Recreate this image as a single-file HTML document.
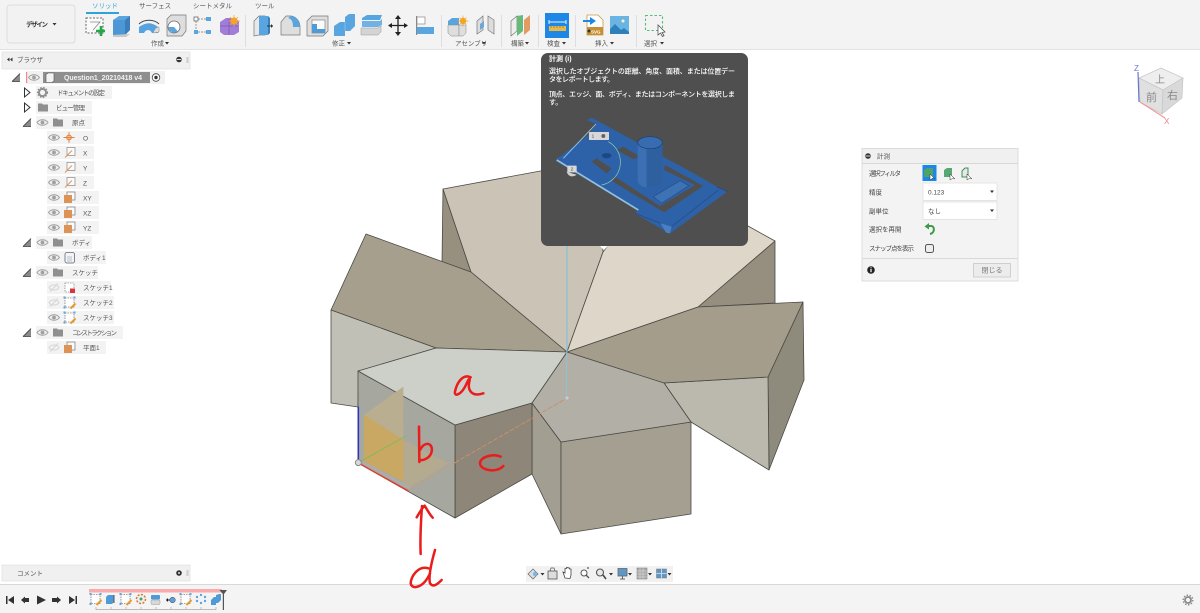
<!DOCTYPE html>
<html lang="ja"><head><meta charset="utf-8"><title>計測</title>
<style>
html,body{margin:0;padding:0;background:#fff;width:1200px;height:613px;overflow:hidden}
svg{display:block}
text{font-family:"Liberation Sans","Noto Sans CJK JP",sans-serif;font-size:7px;fill:#555}
.b{font-weight:700}
.w{fill:#fff}
.e{stroke:#4a4a44;stroke-width:.8;stroke-linejoin:round}
</style></head><body>
<svg width="1200" height="613" viewBox="0 0 1200 613" xmlns="http://www.w3.org/2000/svg">
<defs>
<filter id="s" x="-5%" y="-5%" width="110%" height="110%"><feGaussianBlur stdDeviation="0.35"/></filter>
<g id="eye"><path d="M-5.500,0C-3,-3.600 3,-3.600 5.500,0C3,3.600 -3,3.600 -5.500,0Z" fill="#eee" stroke="#a0a0a0" stroke-width="1"/><circle r="1.900" fill="#a0a0a0"/></g>
<g id="eyeoff"><path d="M-5,0C-3,-3.400 3,-3.400 5,0C3,3.400 -3,3.400 -5,0Z" fill="none" stroke="#d5d5d5" stroke-width="1"/><path d="M-4,4L4,-4" stroke="#d5d5d5"/></g>
<path id="fold" d="M-5,-4H-1L0,-3H5V4H-5Z" fill="#8f8f8f"/>
<g id="tri"><path d="M-4,4L4,-4V4Z" fill="#8a8a8a"/><path d="M-4,4L4,-4" stroke="#333" stroke-width=".8"/><path d="M-4,4H4" stroke="#444" stroke-width=".8"/></g>
<path id="tro" d="M-2.500,-4.500L3,0L-2.500,4.500Z" fill="#fff" stroke="#333" stroke-width="1"/>
<g id="axis"><rect x="-3" y="-5" width="8" height="8" fill="#fafafa" stroke="#888" stroke-width=".7"/><path d="M-5,5L2,-2" stroke="#e2934d" stroke-width=".9"/></g>
<g id="plane"><rect x="-2" y="-6" width="8" height="8" fill="#fafafa" stroke="#777" stroke-width=".7"/><rect x="-5" y="-3" width="8" height="8" fill="#dd9257"/></g>
<g id="sk"><rect x="-4.500" y="-4.500" width="9" height="9" fill="#fff" stroke="#555" stroke-width=".6" stroke-dasharray="1.500 1"/><g fill="#5aa6df"><rect x="-6" y="-6" width="2" height="2"/><rect x="4" y="-6" width="2" height="2"/><rect x="-6" y="4" width="2" height="2"/></g><path d="M1,6L6,1" stroke="#e69a2e" stroke-width="2"/></g>
<polygon id="dn" points="-2,-1 2,-1 0,1.500" fill="#333"/>
</defs>

<rect width="1200" height="613" fill="#fff"/>

<!-- 3D model -->
<g filter="url(#s)">
<polygon class="e" points="443,189 471,272 442,262" fill="#97907f"/>
<polygon class="e" points="775,241 775,303 698,307" fill="#968f80"/>
<polygon class="e" points="443,189 600,160 603,252 567,352 471,272" fill="#cac3b6"/>
<polygon class="e" points="603,252 650,190 748,226 775,241 698,307 567,352" fill="#ddd6c9"/>
<polygon class="e" points="366,234 471,272 567,352 436,348 331,310" fill="#a69f8d"/>
<polygon class="e" points="331,310 436,348 359,371 358,407 331,403" fill="#c0c0b7"/>
<polygon class="e" points="803,302 804,380 769,470 768,377" fill="#8e8a7c"/>
<polygon class="e" points="664,383 768,377 769,470 691,422" fill="#bbb8ae"/>
<polygon class="e" points="567,352 698,307 803,302 768,377 663,383" fill="#a49d8b"/>
<polygon class="e" points="532,403 561,442 561,534 532,474" fill="#a29e92"/>
<polygon class="e" points="561,442 691,422 691,514 561,534" fill="#a49f91"/>
<polygon class="e" points="532,403 567,352 664,383 691,422 561,442" fill="#b2afa7"/>
<polygon class="e" points="455,425 532,403 532,474 455,518" fill="#8e8678"/>
<polygon class="e" points="358,371 455,425 455,518 358,463" fill="#a6a79f"/>
<polygon class="e" points="358,371 436,348 567,352 532,403 455,425" fill="#cdd0c8"/>
<g transform="translate(340,340) scale(.33333)">
<polygon points="72,225 190,140 190,300" fill="#b9ae8f"/>
<polygon points="190,300 325,370 205,445 190,425" fill="#b3aa8f"/>
<polygon points="72,225 190,300 190,425 72,365" fill="#c9a864"/>
<path d="M205,450L345,368" stroke="#c99b74" stroke-width="3" stroke-dasharray="14 5" fill="none"/>
<path d="M345,368L680,175" stroke="#c9906a" stroke-width="3" stroke-dasharray="14 5" fill="none"/>
<path d="M62,372L205,450" stroke="#acacac" stroke-width="8" fill="none" transform="translate(6,-5)"/>
<path d="M62,373L205,453" stroke="#e03a2c" stroke-width="4" fill="none"/>
<path d="M55,200V365" stroke="#2a33c8" stroke-width="4.500" fill="none"/>
<path d="M60,365L200,287" stroke="#86b85a" stroke-width="3" fill="none"/>
<circle cx="55" cy="368" r="9" fill="#d8d8d8" stroke="#888" stroke-width="3"/>
<path d="M680,35V170" stroke="#8fc1d6" stroke-width="3" fill="none"/>
<circle cx="681" cy="174" r="6" fill="#ccc" stroke="#aaa" stroke-width="1.500"/>
</g>
<path d="M567,246V352" stroke="#7fc3dc" stroke-width="1.100"/>
</g>

<!-- Toolbar -->
<rect width="1200" height="49" fill="#f3f3f3"/>
<rect y="49" width="1200" height="1" fill="#e2e2e2"/>
<rect x="7" y="5" width="68" height="38" rx="3" fill="#f2f2f2" stroke="#dcdcdc"/>
<text x="26" y="26.500" class="b" style="fill:#333;font-size:6.500px" textLength="22">デザイン</text>
<use href="#dn" x="54.500" y="24"/>
<g filter="url(#s)">
<text x="92" y="8" style="fill:#2ea3d8;font-size:6.500px">ソリッド</text>
<rect x="86" y="12" width="33" height="2" fill="#2ea3d8"/>
<text x="139" y="8" style="font-size:6.500px">サーフェス</text>
<text x="193" y="8" style="font-size:6.500px">シートメタル</text>
<text x="255" y="8" style="font-size:6.500px">ツール</text>
<g fill="#dedede"><rect x="245" y="15" width="1" height="32"/><rect x="441" y="15" width="1" height="32"/><rect x="501" y="15" width="1" height="32"/><rect x="538" y="15" width="1" height="32"/><rect x="575" y="15" width="1" height="32"/><rect x="636" y="15" width="1" height="32"/></g>
<text x="151" y="45.500" style="font-size:6.500px">作成</text><use href="#dn" x="167" y="43"/>
<text x="332" y="45.500" style="font-size:6.500px">修正</text><use href="#dn" x="349" y="43"/>
<text x="455" y="45.500" style="font-size:6.500px">アセンブリ</text><use href="#dn" x="484" y="43"/>
<text x="511" y="45.500" style="font-size:6.500px">構築</text><use href="#dn" x="527" y="43"/>
<text x="547" y="45.500" style="font-size:6.500px">検査</text><use href="#dn" x="564" y="43"/>
<text x="595" y="45.500" style="font-size:6.500px">挿入</text><use href="#dn" x="612" y="43"/>
<text x="644" y="45.500" style="font-size:6.500px">選択</text><use href="#dn" x="662" y="43"/>

<!-- create icons -->
<rect x="86" y="18" width="17" height="15" fill="#fafafa" stroke="#666" stroke-dasharray="2 1.500"/>
<path d="M90,22H100L93,30" fill="none" stroke="#888" stroke-width=".8"/>
<path d="M101,26V36M96,31H105" stroke="#22a84a" stroke-width="2.600"/>
<path d="M113,20L119,16H130V30L125,35H113Z" fill="#5aa5e0"/>
<path d="M113,20H125V35H113Z" fill="#4d97d6"/>
<path d="M125,20L130,16V30L125,35Z" fill="#3a7fba"/>
<path d="M130,34L113,35V37H126Z" fill="#c8c8c8"/>
<path d="M139,24C144,19 154,19 159,24" fill="none" stroke="#444"/>
<path d="M139,27C146,22 152,22 158,27L158,33H152C150,29 146,29 144,33H139Z" fill="#55a3e0"/>
<path d="M153,33C155,28 157,27 159,27V32Z" fill="#ddd" stroke="#888" stroke-width=".5"/>
<path d="M167,19L171,15H186V31L182,36H167Z" fill="#dedede" stroke="#777" stroke-width=".7"/>
<circle cx="174" cy="27" r="6" fill="#fff" stroke="#666" stroke-width=".8"/><path d="M174,27L168.500,27A6,6 0 0 0 178,31.500Z" fill="#58a5e0"/>
<rect x="194" y="17" width="4" height="4" fill="#fff" stroke="#555" stroke-width=".7"/>
<rect x="206" y="17" width="5" height="4" fill="#58a5e0"/><rect x="194" y="30" width="4" height="4" fill="#58a5e0"/><rect x="206" y="30" width="5" height="4" fill="#58a5e0"/>
<path d="M198,19H206M196,21V30M198,32H206" stroke="#777" stroke-width=".7" stroke-dasharray="2 1"/>
<path d="M220,22L226,18H236L239,22V32L234,35H224L220,32Z" fill="#a17dd8"/><path d="M220,26H238M229,19V35" stroke="#7c58b5" stroke-width=".8"/>
<circle cx="234" cy="21" r="3.500" fill="#f3a52a"/><path d="M234,15V27M228,21H240M230,17L238,25M238,17L230,25" stroke="#f3a52a" stroke-width=".8"/>
<!-- modify icons -->
<path d="M254,21L259,16H265V35H259L254,36Z" fill="#e8e8e8" stroke="#777" stroke-width=".7"/>
<path d="M259,16H268V35H259Z" fill="#58a5e0"/><path d="M268,16L270,18V33L268,35Z" fill="#3a80bd"/>
<path d="M267,26H273" stroke="#333"/><path d="M273,24L271,26L273,28Z" fill="#333" transform="rotate(180 272 26)"/>
<path d="M281,35V22L286,16H291C297,17 300,22 300,27V35Z" fill="#dedede" stroke="#777" stroke-width=".7"/>
<path d="M291,16C297,17 300,22 300,27H293C293,22 292,19 288,18Z" fill="#58a5e0"/>
<path d="M307,21L312,16H328V31L323,36H307Z" fill="#dedede" stroke="#777" stroke-width=".7"/><rect x="312" y="20" width="13" height="13" fill="#fafafa" stroke="#777" stroke-width=".6"/><path d="M312,24H317V29H325V33H312Z" fill="#4f9bd8"/>
<path d="M334,26L340,22H345V17L349,14H355V26L350,31H345V36H334Z" fill="#58a5e0"/><path d="M345,22L345,31" stroke="#8cc4ee" stroke-width=".8"/>
<path d="M362,18L367,15H382L380,20H362Z" fill="#58a5e0"/><path d="M362,21H380L382,19V25L378,27H362Z" fill="#6fb2e6"/><path d="M361,28H378L381,26V32L378,35H361Z" fill="#d4d4d4" stroke="#999" stroke-width=".5"/>
<path d="M398,16V35M389,25.500H407" stroke="#222" stroke-width="1.300"/><path d="M398,15L395,19H401ZM398,36L395,32H401ZM388,25.500L392,23V28ZM408,25.500L404,23V28Z" fill="#222"/>
<rect x="416" y="16" width="1.200" height="19" fill="#888"/><rect x="417" y="17" width="8" height="7" fill="#fff" stroke="#888" stroke-width=".7"/><rect x="417" y="27" width="17" height="7" fill="#58a5e0"/>
<!-- assembly -->
<path d="M448,21L452,18H459V25H448Z" fill="#58a5e0"/><path d="M448,25H459V36H451L448,33Z" fill="#dedede" stroke="#888" stroke-width=".5"/><path d="M459,25H466V33L463,36H459Z" fill="#dedede" stroke="#888" stroke-width=".5"/>
<circle cx="463" cy="21" r="3.200" fill="#f3a52a"/><path d="M463,15.500V26.500M457.500,21H468.500M459.500,17.500L466.500,24.500M466.500,17.500L459.500,24.500" stroke="#f3a52a" stroke-width=".7"/>
<path d="M477,21L483,16V30L477,34Z" fill="#ddd" stroke="#777" stroke-width=".7"/><path d="M488,16L494,20V34L488,30Z" fill="#ddd" stroke="#777" stroke-width=".7"/><path d="M480,24L484,21V27L480,30Z" fill="#6aa8da"/>
<!-- construct -->
<path d="M511,21L517,16V31L511,36Z" fill="#eee" stroke="#777" stroke-width=".7"/>
<path d="M517,16L523,15V31L517,36Z" fill="#66bb78"/><path d="M524,20L530,15V30L524,35Z" fill="#e39a63"/>
<!-- inspect -->
<rect x="545" y="13" width="24" height="25" fill="#1b87e6"/>
<path d="M549,22H566" stroke="#e8f2fb"/><path d="M549,20V24M566,20V24" stroke="#e8f2fb"/>
<rect x="549" y="26" width="17" height="5" fill="#e5ba4a"/><path d="M551,26V28M554,26V28M557,26V28M560,26V28M563,26V28" stroke="#7a6420" stroke-width=".6"/>
<!-- insert -->
<path d="M587,15H598L603,20V35H587Z" fill="#fff" stroke="#c49a4d" stroke-width=".8"/>
<path d="M583,21H591" stroke="#1b87e6" stroke-width="2"/><path d="M590,17L596,21L590,25Z" fill="#1b87e6"/>
<rect x="587" y="27" width="16" height="8" fill="#c69034"/><text x="591" y="33.500" style="font-size:4.500px;fill:#fff" class="b">SVG</text><circle cx="589" cy="31" r="1.500" fill="#333"/>
<rect x="610" y="16" width="19" height="18" fill="#6ab4e4"/><circle cx="623" cy="21" r="1.500" fill="#fff3c4"/><path d="M610,34V29L615,24L621,30L624,28L629,32V34Z" fill="#2d80ba"/>
<!-- select -->
<rect x="645.500" y="15.500" width="17" height="15" fill="none" stroke="#52c07a" stroke-width="1.100" stroke-dasharray="2.500 2"/>
<path d="M658,25L658,35L660.500,33L662.500,36.500L664,35.500L662,32.500L665,32Z" fill="#fff" stroke="#555" stroke-width=".8"/>
</g>

<!-- Browser -->
<g filter="url(#s)">
<rect x="2" y="52" width="188" height="17" fill="#f0f0f0" stroke="#e3e3e3" stroke-width=".8"/>
<path d="M7,59.500L9.500,57.500V61.500ZM10,59.500L12.500,57.500V61.500Z" fill="#333"/>
<text x="17" y="62" style="font-size:6.500px">ブラウザ</text>
<circle cx="179" cy="59.500" r="2.800" fill="#333"/><rect x="176.800" y="59" width="4.400" height="1" fill="#ddd"/>
<rect x="186.500" y="57" width="2" height="6" fill="#ccc"/>

<use href="#tri" x="16" y="77.500"/>
<rect x="27" y="71" width="138" height="13" fill="#f1f1f1"/>
<rect x="26" y="72" width="1.200" height="11" fill="#f08a8a"/>
<use href="#eye" x="34" y="77.500"/>
<rect x="43" y="72" width="107" height="11" fill="#8f8f8f"/>
<path d="M46,74.500L48,73H54V81L52,82.500H46Z" fill="#f2f2f2" stroke="#555" stroke-width=".6"/>
<text x="64" y="80" class="b" style="fill:#f1f1f1;font-size:7px" textLength="78">Question1_20210418 v4</text>
<circle cx="156" cy="77.500" r="3.800" fill="#fff" stroke="#444" stroke-width=".8"/><circle cx="156" cy="77.500" r="1.700" fill="#333"/>

<use href="#tro" x="27" y="92.500"/>
<rect x="36" y="86" width="76" height="13" fill="#f3f3f3"/>
<circle cx="42.500" cy="92.500" r="3.600" fill="none" stroke="#8f8f8f" stroke-width="2"/><circle cx="42.500" cy="92.500" r="5" fill="none" stroke="#8f8f8f" stroke-width="1.200" stroke-dasharray="1.500 1.500"/>
<text x="57" y="95" style="font-size:6.500px" textLength="48">ドキュメントの設定</text>

<use href="#tro" x="27" y="107.500"/>
<rect x="36" y="101" width="56" height="13" fill="#f3f3f3"/><use href="#fold" x="43" y="107.500"/>
<text x="56" y="110" style="font-size:6.500px" textLength="29">ビュー管理</text>

<use href="#tri" x="27" y="122.500"/>
<rect x="36" y="116" width="56" height="13" fill="#f3f3f3"/><use href="#eye" x="42.500" y="122.500"/><use href="#fold" x="58" y="122.500"/>
<text x="72" y="125" style="font-size:6.500px">原点</text>

<rect x="47" y="131" width="47" height="13" fill="#f3f3f3"/><use href="#eye" x="54" y="137.500"/>
<circle cx="69" cy="137.500" r="2.300" fill="none" stroke="#e2813a" stroke-width="1.200"/><path d="M69,132V143M63.500,137.500H74.500" stroke="#e2813a" stroke-width=".9"/><text x="83" y="140.500" style="font-size:6.500px">O</text>
<rect x="47" y="146" width="47" height="13" fill="#f3f3f3"/><use href="#eye" x="54" y="152.500"/><use href="#axis" x="70" y="152.500"/><text x="83" y="155.500" style="font-size:6.500px">X</text>
<rect x="47" y="161" width="47" height="13" fill="#f3f3f3"/><use href="#eye" x="54" y="167.500"/><use href="#axis" x="70" y="167.500"/><text x="83" y="170.500" style="font-size:6.500px">Y</text>
<rect x="47" y="176" width="47" height="13" fill="#f3f3f3"/><use href="#eye" x="54" y="182.500"/><use href="#axis" x="70" y="182.500"/><text x="83" y="185.500" style="font-size:6.500px">Z</text>
<rect x="47" y="191" width="52" height="13" fill="#f3f3f3"/><use href="#eye" x="54" y="197.500"/><use href="#plane" x="69" y="198"/><text x="83" y="200.500" style="font-size:6.500px">XY</text>
<rect x="47" y="206" width="52" height="13" fill="#f3f3f3"/><use href="#eye" x="54" y="212.500"/><use href="#plane" x="69" y="213"/><text x="83" y="215.500" style="font-size:6.500px">XZ</text>
<rect x="47" y="221" width="52" height="13" fill="#f3f3f3"/><use href="#eye" x="54" y="227.500"/><use href="#plane" x="69" y="228"/><text x="83" y="230.500" style="font-size:6.500px">YZ</text>

<use href="#tri" x="27" y="242.500"/>
<rect x="36" y="236" width="56" height="13" fill="#f3f3f3"/><use href="#eye" x="42.500" y="242.500"/><use href="#fold" x="58" y="242.500"/>
<text x="72" y="245" style="font-size:6.500px">ボディ</text>
<rect x="47" y="251" width="59" height="13" fill="#f3f3f3"/><use href="#eye" x="54" y="257.500"/>
<rect x="65" y="252.500" width="9.500" height="10.500" rx="2" fill="#f4f4f4" stroke="#667" stroke-width=".8"/><rect x="67" y="256" width="5" height="6" fill="#d5dbe2"/>
<text x="83" y="260" style="font-size:6.500px">ボディ1</text>

<use href="#tri" x="27" y="272.500"/>
<rect x="36" y="266" width="62" height="13" fill="#f3f3f3"/><use href="#eye" x="42.500" y="272.500"/><use href="#fold" x="58" y="272.500"/>
<text x="72" y="275" style="font-size:6.500px">スケッチ</text>
<rect x="47" y="281" width="64" height="13" fill="#f3f3f3"/><use href="#eyeoff" x="54" y="287.500"/>
<rect x="65" y="283" width="9" height="9" fill="#fff" stroke="#666" stroke-width=".6" stroke-dasharray="1.500 1"/><rect x="70" y="288.500" width="5" height="4.500" fill="#d8363c"/>
<text x="83" y="290" style="font-size:6.500px">スケッチ1</text>
<rect x="47" y="296" width="67" height="13" fill="#f3f3f3"/><use href="#eyeoff" x="54" y="302.500"/><use href="#sk" x="69.500" y="302.500"/>
<text x="83" y="305" style="font-size:6.500px">スケッチ2</text>
<rect x="47" y="311" width="67" height="13" fill="#f3f3f3"/><use href="#eye" x="54" y="317.500"/><use href="#sk" x="69.500" y="317.500"/>
<text x="83" y="320" style="font-size:6.500px">スケッチ3</text>

<use href="#tri" x="27" y="332.500"/>
<rect x="36" y="326" width="87" height="13" fill="#f3f3f3"/><use href="#eye" x="42.500" y="332.500"/><use href="#fold" x="58" y="332.500"/>
<text x="72" y="335" style="font-size:6.500px" textLength="45">コンストラクション</text>
<rect x="47" y="341" width="59" height="13" fill="#f3f3f3"/><use href="#eyeoff" x="54" y="347.500"/><use href="#plane" x="69" y="348"/>
<text x="83" y="350" style="font-size:6.500px">平面1</text>
</g>

<!-- Tooltip -->
<rect x="541" y="53" width="207" height="193" rx="7" fill="#4f4f4f"/>
<polygon points="600,246 608,246 604,250" fill="#fff"/>
<g filter="url(#s)">
<text x="549" y="61" class="b" style="fill:#fff;font-size:7px">計測 (i)</text>
<text x="549" y="73.500" style="fill:#fff;font-size:7px;font-weight:500" textLength="186">選択したオブジェクトの距離、角度、面積、または位置デー</text>
<text x="549" y="81.500" style="fill:#fff;font-size:7px;font-weight:500" textLength="65">タをレポートします。</text>
<text x="549" y="96.500" style="fill:#fff;font-size:7px;font-weight:500" textLength="186">頂点、エッジ、面、ボディ、またはコンポーネントを選択しま</text>
<text x="549" y="104.500" style="fill:#fff;font-size:7px;font-weight:500">す。</text>
<g transform="translate(540,50) scale(.33333)">
<path d="M140,210L155,203L470,375L530,410L562,425L390,550L362,535L285,490L297,478L110,365L48,326L60,320L145,255L170,222Z" fill="#2f62a8"/>
<path d="M362,520L378,548L390,550L395,530Z" fill="#4a80c4"/>
<path d="M285,490L362,520M395,530L535,420M530,410L562,425" stroke="#234a80" stroke-width="2" fill="none"/>
<path d="M50,330L295,480" stroke="#8fc0e6" stroke-width="5" fill="none"/>
<path d="M70,325L168,222" stroke="#9cc9e8" stroke-width="2.500" fill="none"/>
<path d="M230,300L250,290L300,320L280,328Z M155,335L170,325L215,355L200,370Z" fill="#4f4f4f"/>
<path d="M375,345L490,408L372,487L218,395L222,378L360,468L465,405L372,360Z" fill="#4f4f4f"/>
<path d="M340,440L420,392L447,407L365,460Z" fill="#3d72b5" stroke="#264f87" stroke-width="2"/>
<ellipse cx="200" cy="317" rx="15" ry="8" fill="#1f4a85"/>
<path d="M293,278V390C293,418 368,418 368,390V278Z" fill="#2e5f9f"/>
<path d="M293,278V390C293,405 310,412 320,412V278Z" fill="#3a70b4"/>
<ellipse cx="330" cy="278" rx="37" ry="18" fill="#376cb0" stroke="#1c3f72" stroke-width="2"/>
<path d="M205,275A70,70 0 0 1 185,405" fill="none" stroke="#8fd0a8" stroke-width="2"/>
<rect x="147" y="246" width="60" height="24" rx="2" fill="#d8d8d8"/><circle cx="190" cy="258" r="6" fill="#666"/><text x="155" y="263" style="font-size:14px;fill:#444">1</text>
<rect x="82" y="347" width="28" height="20" rx="2" fill="#d8d8d8"/><text x="92" y="362" style="font-size:14px;fill:#444">2</text>
<path d="M80,365C85,382 100,382 110,374L95,370Z" fill="#d0d0d0"/>
</g>
</g>

<!-- Measure panel -->
<g filter="url(#s)">
<rect x="862" y="148.500" width="156" height="132.500" fill="#f3f3f3" stroke="#dcdcdc"/>
<rect x="862.500" y="149" width="155" height="14" fill="#f0f0f0"/>
<rect x="862" y="163" width="156" height="1" fill="#d8d8d8"/>
<circle cx="868" cy="156" r="2.800" fill="#333"/><rect x="865.800" y="155.500" width="4.400" height="1" fill="#ddd"/>
<text x="877" y="158.500" style="font-size:6.500px">計測</text>
<text x="869" y="175.500" style="font-size:6.500px;fill:#444" textLength="32">選択フィルタ</text>
<rect x="922.500" y="165" width="14" height="16" fill="#1b87e6"/>
<path d="M924,170L927,168H933V177H924Z" fill="#4fa36a"/><path d="M930,174V180L933,178L935,179Z" fill="#fff" stroke="#333" stroke-width=".5"/>
<path d="M944,170L947,168H952V177H944Z" fill="#57a873"/><path d="M950,174V180L953,178L955,179Z" fill="#fff" stroke="#333" stroke-width=".5"/>
<path d="M962,171L965,168H968V177H962Z" fill="#e8e8e8" stroke="#3d8f58" stroke-width="1"/><path d="M967,174V180L970,178L972,179Z" fill="#fff" stroke="#333" stroke-width=".5"/>
<text x="869" y="194.500" style="font-size:6.500px;fill:#444">精度</text>
<rect x="923" y="183" width="74" height="17.500" fill="#fff" stroke="#e4e4e4"/>
<text x="928" y="194.500" style="font-size:6.500px;fill:#444">0.123</text><use href="#dn" x="992" y="191.500"/>
<text x="869" y="213.500" style="font-size:6.500px;fill:#444">副単位</text>
<rect x="923" y="202" width="74" height="17.500" fill="#fff" stroke="#e4e4e4"/>
<text x="928" y="213.500" style="font-size:6.500px;fill:#444">なし</text><use href="#dn" x="992" y="210.500"/>
<text x="869" y="231.500" style="font-size:6.500px;fill:#444">選択を再開</text>
<path d="M927,226H931C935,226 935,233 930,234" fill="none" stroke="#3f9a4c" stroke-width="2"/><path d="M929,223L924.500,226.500L929,229.500Z" fill="#3f9a4c"/>
<text x="869" y="250.500" style="font-size:6.500px;fill:#444" textLength="45">スナップ点を表示</text>
<rect x="925.500" y="244.500" width="8" height="8" rx="2" fill="#eee" stroke="#555"/>
<rect x="862.500" y="258" width="155" height="1" fill="#d8d8d8"/>
<circle cx="871" cy="270" r="3.800" fill="#222"/><rect x="870.400" y="269" width="1.200" height="3.200" fill="#fff"/><rect x="870.400" y="267.300" width="1.200" height="1" fill="#fff"/>
<rect x="973.500" y="263.500" width="37" height="13.500" fill="#ececec" stroke="#cfcfcf"/>
<text x="992" y="272.500" text-anchor="middle" style="font-size:7px;fill:#777">閉じる</text>
</g>

<!-- ViewCube -->
<g filter="url(#s)">
<polygon points="1139,78 1161,68 1183,78 1163,90" fill="#eeeeee" stroke="#c5c5c5" stroke-width=".7"/>
<polygon points="1139,78 1163,90 1162,114 1140,102" fill="#e0e0e0" stroke="#c5c5c5" stroke-width=".7"/>
<polygon points="1163,90 1183,78 1182,98 1162,114" fill="#d9d9d9" stroke="#c5c5c5" stroke-width=".7"/>
<text x="1155" y="83" style="font-size:10px;fill:#888">上</text>
<text x="1146" y="101" style="font-size:11px;fill:#888">前</text>
<text x="1167" y="99" style="font-size:11px;fill:#888">右</text>
<path d="M1139,102L1138,72" stroke="#6a74d8" stroke-width="1.200"/>
<path d="M1140,102L1165,118" stroke="#ef9a9a" stroke-width="1.200"/>
<text x="1134" y="71" style="font-size:8px;fill:#6a74d8">Z</text>
<text x="1164" y="124" style="font-size:8px;fill:#e98080">X</text>
</g>

<!-- View bar -->
<g filter="url(#s)">
<rect x="526" y="566" width="147" height="16" fill="#f1f1f1"/>
<path d="M533,569L538,574L533,579L528,574Z" fill="#ddd" stroke="#666" stroke-width=".7"/><circle cx="535" cy="574" r="2.200" fill="#7cb5e0"/><use href="#dn" x="542.500" y="574"/>
<rect x="548" y="571" width="9" height="8" fill="#ddd" stroke="#555" stroke-width=".8"/><path d="M550,571L551,568H554L555,571" fill="none" stroke="#555" stroke-width=".7"/>
<path d="M565,578L563,572L565,573V568.500H566.500V567.500H568V568H569.500V569H571V575L570,578.500Z" fill="#fff" stroke="#444" stroke-width=".8"/>
<circle cx="584" cy="573" r="3" fill="#fff" stroke="#555"/><path d="M586,575L589,578" stroke="#555" stroke-width="1.300"/><path d="M588,569V567M587,568H589" stroke="#555" stroke-width=".7"/>
<circle cx="600" cy="572.500" r="3.500" fill="#e8e8e8" stroke="#555" stroke-width="1.100"/><path d="M603,575L606,579" stroke="#444" stroke-width="1.600"/><use href="#dn" x="611" y="574"/>
<rect x="618" y="568.500" width="9" height="7.500" fill="#5f97c7" stroke="#666" stroke-width=".8"/><path d="M620,579H625M622.500,576V579" stroke="#666"/><use href="#dn" x="630" y="574"/>
<rect x="637" y="568" width="10" height="11" fill="#aaa" stroke="#777" stroke-width=".5"/><path d="M637,571H647M637,574H647M637,577H647M640,568V579M643,568V579" stroke="#e2e2e2" stroke-width=".5"/><use href="#dn" x="650" y="574"/>
<rect x="656.500" y="569" width="10" height="9" fill="#5f97c7" stroke="#777" stroke-width=".5"/><path d="M661.500,569V578M656.500,573.500H666.500" stroke="#e5e5e5" stroke-width=".8"/><use href="#dn" x="669.500" y="574"/>
</g>

<!-- Comment panel -->
<g filter="url(#s)">
<rect x="2" y="565" width="188" height="16" fill="#f0f0f0" stroke="#e3e3e3" stroke-width=".8"/>
<text x="17" y="575.500" style="font-size:6.500px">コメント</text>
<circle cx="179" cy="573" r="2.800" fill="#333"/><circle cx="179" cy="573" r="1" fill="#ddd"/>
<rect x="186.500" y="570" width="2" height="6" fill="#ccc"/>
</g>

<!-- Timeline -->
<rect y="584" width="1200" height="29" fill="#f4f4f4"/>
<rect y="584" width="1200" height="1" fill="#d8d8d8"/>
<g filter="url(#s)">
<rect x="89" y="589" width="133" height="3.500" fill="#f9aaaa"/>
<g fill="#333">
<rect x="6" y="596" width="1.500" height="8"/><path d="M14,596V604L8,600Z"/>
<path d="M21,600L25,596.500V603.500Z"/><rect x="25" y="598" width="4" height="4"/>
<path d="M37,595.500L46,600L37,604.500Z"/>
<path d="M61,600L57,596.500V603.500Z"/><rect x="52" y="598" width="5" height="4"/>
<rect x="75.500" y="596" width="1.500" height="8"/><path d="M69,596V604L75,600Z"/>
</g>
<use href="#sk" x="95.500" y="599"/>
<path d="M106,597L108,595H114V602L112,604H106Z" fill="#4f9bd8"/><path d="M114,595V603" stroke="#555"/>
<use href="#sk" x="125.500" y="599"/>
<circle cx="141" cy="599" r="4.500" fill="#eee" stroke="#d8773d" stroke-width="1.500" stroke-dasharray="2 1.500"/><circle cx="141" cy="599" r="1.500" fill="#55a06a"/>
<rect x="151" y="595" width="9" height="4.500" rx="1" fill="#4f9bd8"/><rect x="151" y="600" width="9" height="4.500" rx="1" fill="#d8d8d8" stroke="#888" stroke-width=".4"/>
<path d="M166,600H170" stroke="#222"/><path d="M166,598L168,600L166,602Z" fill="#222" transform="rotate(180 167 600)"/><circle cx="172.500" cy="600" r="2.800" fill="#5f9fd5" stroke="#446" stroke-width=".5"/>
<use href="#sk" x="185.500" y="599"/>
<g fill="#5aa6df"><circle cx="201" cy="595" r="1.200"/><circle cx="205" cy="597" r="1.200"/><circle cx="205" cy="601" r="1.200"/><circle cx="201" cy="603" r="1.200"/><circle cx="197" cy="601" r="1.200"/><circle cx="197" cy="597" r="1.200"/></g>
<path d="M211,600L214,597H216V595L219,594H221V600L218,603H216V605H211Z" fill="#4f9bd8"/>
<path d="M219.500,590H227L224,594V610H222.800V594Z" fill="#555"/>
<path d="M96,607V609.500H216V607M111,607V609.500M126,607V609.500M141,607V609.500M156,607V609.500M171,607V609.500M186,607V609.500M201,607V609.500" fill="none" stroke="#aaa" stroke-width=".7"/>
<circle cx="1188" cy="600" r="3" fill="none" stroke="#8a8a8a" stroke-width="1.800"/><circle cx="1188" cy="600" r="4.800" fill="none" stroke="#8a8a8a" stroke-width="1.400" stroke-dasharray="1.500 1.500"/>
</g>

<!-- handwriting (sits above everything, d overlaps the timeline bar) -->
<g transform="translate(340,340) scale(.33333)" fill="none" stroke="#ea1c1c" stroke-width="7.500" stroke-linecap="round" stroke-linejoin="round">
<path d="M392,112C368,100 350,130 345,155C342,172 365,165 380,130C385,118 392,110 388,125C382,150 395,172 430,160"/>
<path d="M237,260L238,366M240,330C255,300 280,310 275,335C270,355 250,362 240,360"/>
<path d="M482,350C460,340 420,350 420,370C422,392 470,400 490,378"/>
<path d="M242,642C240,600 243,540 246,498M230,532C240,515 250,500 254,497C262,510 270,525 278,533"/>
<path d="M265,685C235,675 212,710 212,730C215,750 250,745 270,700M285,630C275,665 265,710 270,730C280,745 295,730 305,720"/>
</g>
</svg>
</body></html>
